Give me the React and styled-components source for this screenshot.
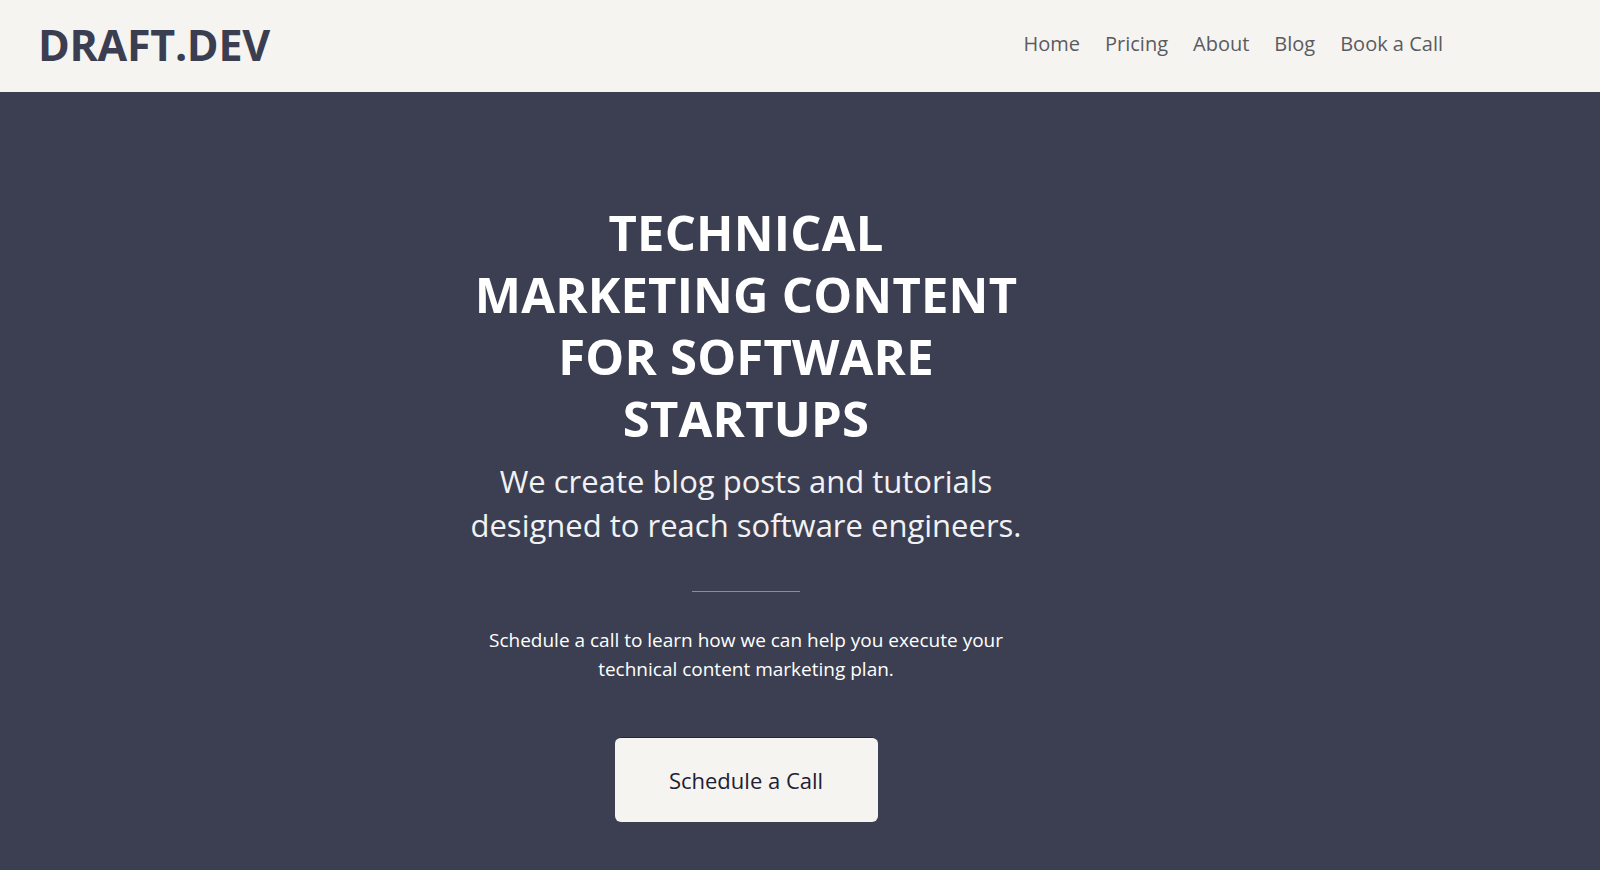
import React from "react";
import styled, { createGlobalStyle } from "styled-components";

const GlobalStyle = createGlobalStyle`
  html, body {
    margin: 0;
    padding: 0;
    background: #3c3f51;
  }
  body {
    font-family: "Open Sans", "Noto Sans", sans-serif;
  }
  * {
    box-sizing: border-box;
  }
`;

const Header = styled.header`
  height: 92px;
  background: #f5f4f0;
  display: flex;
  align-items: center;
  justify-content: space-between;
  padding: 0 157px 0 38px;
`;

const Logo = styled.a`
  font-size: 43px;
  font-weight: 700;
  color: #3b3e51;
  text-decoration: none;
  letter-spacing: -0.3px;
  line-height: 1;
  margin-top: -3px;
`;

const Nav = styled.nav`
  display: flex;
  align-items: center;
  gap: 25px;
  margin-top: -6px;
`;

const NavLink = styled.a`
  font-size: 20px;
  color: #5b5b5f;
  text-decoration: none;
`;

const Hero = styled.section`
  background: #3c3f51;
  min-height: 778px;
  padding: 109px 108px 60px 0;
  display: flex;
  flex-direction: column;
  align-items: center;
  text-align: center;
`;

const Title = styled.h1`
  margin: 0;
  font-size: 49px;
  line-height: 62px;
  font-weight: 700;
  letter-spacing: 0.2px;
  color: #ffffff;
  text-transform: uppercase;
`;

const Subtitle = styled.p`
  margin: 10px 0 0;
  font-size: 31px;
  line-height: 44px;
  color: #f2f2f4;
`;

const Divider = styled.hr`
  width: 108px;
  height: 1px;
  border: 0;
  background: #8b8d9b;
  margin: 44px 0 0;
`;

const Lead = styled.p`
  margin: 34px 0 0;
  font-size: 19px;
  line-height: 29px;
  color: #ffffff;
`;

const CallButton = styled.button`
  margin-top: 53px;
  width: 263px;
  height: 85px;
  border: 0;
  border-top: 1px solid #23264a;
  border-radius: 6px;
  background: #f5f4f0;
  color: #1f2033;
  font-family: inherit;
  font-size: 22px;
  cursor: pointer;
`;

const App = () => {
  return (
    <>
      <GlobalStyle />
      <Header>
        <Logo href="#">DRAFT.DEV</Logo>
        <Nav>
          {["Home", "Pricing", "About", "Blog", "Book a Call"].map((item) => (
            <NavLink key={item} href="#">
              {item}
            </NavLink>
          ))}
        </Nav>
      </Header>
      <Hero>
        <Title>
          Technical
          <br />
          Marketing Content
          <br />
          for Software
          <br />
          Startups
        </Title>
        <Subtitle>
          We create blog posts and tutorials
          <br />
          designed to reach software engineers.
        </Subtitle>
        <Divider />
        <Lead>
          Schedule a call to learn how we can help you execute your
          <br />
          technical content marketing plan.
        </Lead>
        <CallButton>Schedule a Call</CallButton>
      </Hero>
    </>
  );
};

export default App;
